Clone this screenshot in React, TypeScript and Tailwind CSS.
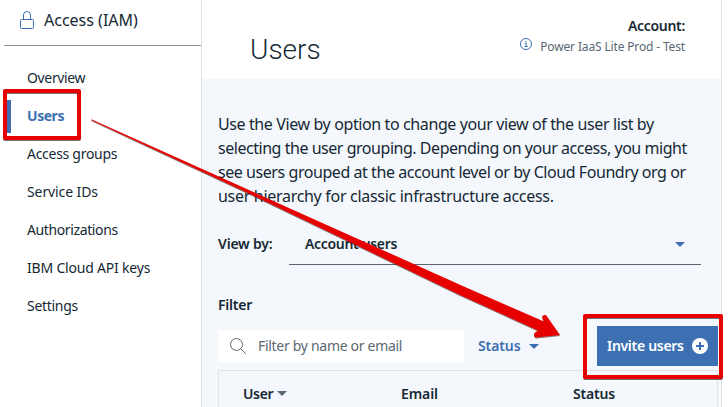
const navItems = [
  { label: 'Overview', tracking: 'tracking-[-0.35px]' },
  { label: 'Users', tracking: 'tracking-[-0.45px]', active: true },
  { label: 'Access groups', tracking: 'tracking-[-0.28px]' },
  { label: 'Service IDs', tracking: 'tracking-[-0.1px]' },
  { label: 'Authorizations', tracking: 'tracking-[-0.38px]' },
  { label: 'IBM Cloud API keys', tracking: 'tracking-[-0.2px]' },
  { label: 'Settings', tracking: 'tracking-[-0.3px]' },
];

const intro = [
  { text: 'Use the View by option to change your view of the user list by', tracking: 'tracking-[-0.39px]' },
  { text: 'selecting the user grouping. Depending on your access, you might', tracking: 'tracking-[-0.465px]' },
  { text: 'see users grouped at the account level or by Cloud Foundry org or', tracking: 'tracking-[-0.44px]' },
  { text: 'user hierarchy for classic infrastructure access.', tracking: 'tracking-[-0.3px]' },
];

function Caret({ className }: { className: string }) {
  return (
    <svg className={className} width="10" height="5" viewBox="0 0 10 5" fill="currentColor">
      <path d="M0 0h10L5 5z" />
    </svg>
  );
}

function Sidebar() {
  return (
    <aside className="h-full w-[202px] shrink-0 border-r border-[#dfe3e6] pl-1">
      <div className="flex h-[46px] items-start border-b border-[#8897a2] pl-4 pt-[8px]">
        <svg className="mt-[3px]" width="14" height="18" viewBox="0 0 14 18" fill="none" stroke="#3d70b2">
          <rect x="0.5" y="8.5" width="13" height="9" rx="1" />
          <path d="M3.5 8.5V4a3.5 3.5 0 0 1 7 0v4.5" />
        </svg>
        <span className="ml-[10px] text-[16px] leading-6">Access (IAM)</span>
      </div>
      <nav className="flex flex-col pt-[13px]">
        {navItems.map((item) => (
          <div key={item.label} className="flex h-[38px] items-center pl-[3px]">
            <div className={`flex h-[33px] items-center border-l-4 pb-[2px] pl-4 text-[14px] ${item.tracking} ${item.active ? 'border-[#3d70b2] font-bold text-[#3d70b2]' : 'border-transparent'}`}>
              {item.label}
            </div>
          </div>
        ))}
      </nav>
    </aside>
  );
}

function Header() {
  return (
    <header className="flex h-[79px] justify-between bg-white pl-[48px] pr-[36px]">
      <h1 className="pt-[30px] font-[Roboto] text-[28px] font-light leading-10">Users</h1>
      <div className="flex flex-col items-end pt-[16px]">
        <div className="text-[14px] font-semibold leading-5 tracking-[-0.3px]">Account:</div>
        <div className="flex items-start text-[12px] leading-5 tracking-[-0.15px] text-[#5a6872]">
          <svg className="mr-2 mt-[2px]" width="12" height="12" viewBox="0 0 12 12" fill="none" stroke="#3d70b2">
            <circle cx="6" cy="6" r="5.5" />
            <path d="M4.6 5.2H6.2V8.5M4.5 8.5h3.2M5.4 3.4h1.2" />
          </svg>
          <span className="pt-px">Power IaaS Lite Prod - Test</span>
        </div>
      </div>
    </header>
  );
}

function UsersTable() {
  return (
    <div className="mt-1 flex h-[37px] w-[500px] border border-b-0 border-[#dfe3e6] pl-[24px] text-[14px] font-semibold">
      <div className="flex w-[158px] items-center pt-[9px]">
        <span className="tracking-[-0.35px]">User</span>
        <Caret className="ml-1 text-[#5a6872]" />
      </div>
      <div className="flex w-[172px] items-center pt-[9px] tracking-[-0.1px]">Email</div>
      <div className="flex items-center pt-[9px] tracking-[-0.2px]">Status</div>
    </div>
  );
}

function Annotations() {
  return (
    <svg className="pointer-events-none absolute left-0 top-0" width="728" height="407" viewBox="0 0 728 407" fill="none">
      <defs>
        <filter id="shade" x="-5%" y="-5%" width="110%" height="110%">
          <feDropShadow dx="0" dy="1" stdDeviation="0.5" floodColor="#000" floodOpacity="0.55" />
        </filter>
      </defs>
      <g filter="url(#shade)">
        <rect x="5" y="91" width="74" height="47" stroke="#e60000" strokeWidth="4" strokeLinejoin="round" />
        <rect x="585" y="316" width="136" height="61" stroke="#e60000" strokeWidth="4" strokeLinejoin="round" />
        <path d="M91.4 119.2L465 287L544 321.5L542 317Q542.5 314.5 546 315L560 335L536 337.5Q533 336.5 534.5 333L538 330.5L460 295L250 194L91.4 120.2Z" fill="#e60000" />
      </g>
    </svg>
  );
}

export default function App() {
  return (
    <div className="relative flex h-[407px] w-[728px] overflow-hidden bg-white font-['Noto_Sans',sans-serif] text-[#152935]">
      <Sidebar />
      <main className="h-full w-[520px] shrink-0 border-r border-[#dfe3e6] bg-[#f4f7fb]">
        <Header />
        <section className="pl-4">
          <div className="whitespace-nowrap pt-[33px] text-[16px] leading-6">
            {intro.map((line) => (
              <p key={line.text} className={line.tracking}>{line.text}</p>
            ))}
          </div>
          <div className="mt-[16px] flex h-[41px] items-stretch text-[14px] font-semibold">
            <div className="flex w-[71px] items-center pb-[2px] tracking-[-0.2px]">View by:</div>
            <div className="flex w-[412px] items-center justify-between border-b border-[#5a6872] pl-4 pr-4">
              <span className="pb-[2px] tracking-[-0.33px]">Account users</span>
              <Caret className="text-[#3d70b2]" />
            </div>
          </div>
          <div className="mt-[30px] h-5 text-[14px] font-semibold leading-5 tracking-[-0.2px]">Filter</div>
          <div className="mt-[11px] flex h-10 items-center">
            <div className="flex h-8 w-[246px] items-center bg-white pl-3 text-[14px] text-[#5a6872]">
              <svg width="16" height="16" viewBox="0 0 16 16" fill="none" stroke="#5a6872">
                <circle cx="6.5" cy="6.5" r="6" />
                <path d="M11 11l4.7 4.7" />
              </svg>
              <span className="ml-[12px] pb-[2px] tracking-[-0.3px]">Filter by name or email</span>
            </div>
            <div className="ml-[14px] flex w-[119px] items-center text-[14px] font-semibold text-[#3d70b2]">
              <span className="pb-[2px] tracking-[-0.1px]">Status</span>
              <Caret className="ml-2" />
            </div>
            <button className="flex h-10 w-[121px] items-center justify-between bg-[#3d70b2] pl-[10px] pr-[10px] text-[14px] font-semibold text-white">
              <span className="whitespace-nowrap pb-[2px] tracking-[-0.3px]">Invite users</span>
              <svg width="16" height="16" viewBox="0 0 16 16">
                <circle cx="8" cy="8" r="8" fill="white" />
                <path d="M8 4v8M4 8h8" stroke="#3d70b2" strokeWidth="2" />
              </svg>
            </button>
          </div>
          <UsersTable />
        </section>
      </main>
      <Annotations />
    </div>
  );
}
